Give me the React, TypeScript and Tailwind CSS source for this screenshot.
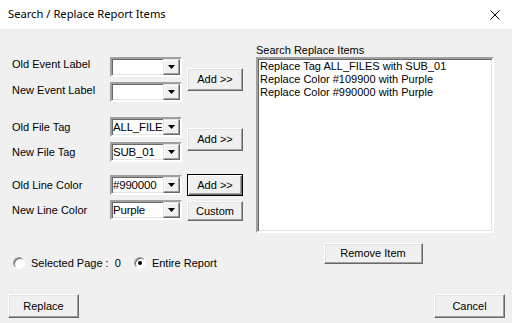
import React from "react";

const font = { fontFamily: '"Liberation Sans", Arial, sans-serif' };

function Arrow() {
  return (
    <svg width="7" height="4" viewBox="0 0 7 4" className="block">
      <path d="M0 0h7L3.5 4z" fill="#000" />
    </svg>
  );
}

function Combo({ value = "" }: { value?: string }) {
  return (
    <div className="flex h-[20px] w-[72px] border-2 border-t-[#a0a0a0] border-l-[#a0a0a0] border-b-white border-r-white bg-white shadow-[inset_1px_1px_0_#696969,inset_-1px_-1px_0_#e3e3e3]">
      <div className="flex-1 overflow-hidden whitespace-nowrap pl-[1px] pt-[1px] text-[11.5px] leading-[14px] tracking-[-0.2px] text-black">{value}</div>
      <div className="flex h-[16px] w-[17px] items-center justify-center border border-t-[#e3e3e3] border-l-[#e3e3e3] border-b-[#696969] border-r-[#696969] bg-[#f0f0f0] shadow-[inset_-1px_-1px_0_#a0a0a0,inset_1px_1px_0_#fff]">
        <Arrow />
      </div>
    </div>
  );
}

function Btn({ label, w, h, def = false }: { label: string; w: string; h: string; def?: boolean }) {
  return (
    <button
      className={`${w} ${h} ${def ? "border-[#000]" : "border-t-white border-l-white border-b-[#696969] border-r-[#696969]"} flex shrink-0 items-center justify-center border bg-[#f0f0f0] text-[11px] text-black ${def ? "shadow-[inset_1px_1px_0_#fff,inset_-1px_-1px_0_#696969,inset_-2px_-2px_0_#a0a0a0]" : "shadow-[inset_-1px_-1px_0_#a0a0a0,inset_1px_1px_0_#e3e3e3]"}`}
    >
      {label}
    </button>
  );
}

function Group({ rows, buttons }: { rows: [string, string, string][]; buttons: React.ReactNode }) {
  return (
    <div className="flex items-center">
      <div className="flex w-[98px] flex-col gap-[5px]">
        {rows.map(([l, , pad]) => (
          <div key={l} className={`flex h-[20px] items-center text-[11px] ${pad}`}>
            {l}
          </div>
        ))}
      </div>
      <div className="flex flex-col gap-[5px]">
        {rows.map(([l, v]) => (
          <Combo key={l} value={v} />
        ))}
      </div>
      <div className="ml-[5px] flex flex-col">{buttons}</div>
    </div>
  );
}

function Radio({ on, label }: { on?: boolean; label: string }) {
  return (
    <div className="flex items-center gap-[6px]">
      <div className="flex h-[12px] w-[12px] items-center justify-center rounded-full border border-t-[#a0a0a0] border-l-[#a0a0a0] border-b-white border-r-white bg-white shadow-[inset_1px_1px_0_#696969]">
        {on && <div className="h-[4px] w-[4px] rounded-full bg-black" />}
      </div>
      <span className="whitespace-pre text-[11px]">{label}</span>
    </div>
  );
}

export default function App() {
  return (
    <div className="flex h-[323px] w-[512px] flex-col overflow-hidden bg-[#f0f0f0] text-black" style={font}>
      <div className="flex h-[29px] shrink-0 items-center justify-between bg-white pl-[8px] pr-[12px]">
        <span className="text-[11.2px]" style={{ fontFamily: '"Noto Sans", "Open Sans", sans-serif' }}>
          Search / Replace Report Items
        </span>
        <svg width="10" height="10" viewBox="0 0 10 10">
          <path d="M0.5 0.5L9.5 9.5M9.5 0.5L0.5 9.5" stroke="#000" strokeWidth="1" />
        </svg>
      </div>

      <div className="flex shrink-0">
        <div className="flex w-[256px] flex-col pt-[28px]">
          <div className="pl-[12px]">
            <Group
              rows={[
                ["Old Event Label", "", "pb-[6px]"],
                ["New Event Label", "", "pb-[3px]"],
              ]}
              buttons={<Btn label="Add >>" w="w-[56px]" h="h-[23px]" />}
            />
          </div>
          <div className="mt-[15px] pl-[12px]">
            <Group
              rows={[
                ["Old File Tag", "ALL_FILES", ""],
                ["New File Tag", "SUB_01", ""],
              ]}
              buttons={<Btn label="Add >>" w="w-[56px]" h="h-[23px]" />}
            />
          </div>
          <div className="mt-[12px] pl-[12px]">
            <Group
              rows={[
                ["Old Line Color", "#990000", ""],
                ["New Line Color", "Purple", ""],
              ]}
              buttons={
                <div className="flex flex-col gap-[5px]">
                  <Btn label="Add >>" w="w-[56px]" h="h-[22px]" def />
                  <Btn label="Custom" w="w-[56px]" h="h-[20px]" />
                </div>
              }
            />
          </div>
          <div className="mt-[36px] flex h-[12px] items-center gap-[13px] pl-[13px]">
            <Radio label="Selected Page :  0" />
            <Radio on label="Entire Report" />
          </div>
        </div>

        <div className="flex flex-col pt-[15px]">
          <div className="h-[13px] text-[11px] leading-[13px]">Search Replace Items</div>
          <div className="h-[176px] w-[238px] border-2 border-t-[#a0a0a0] border-l-[#a0a0a0] border-b-white border-r-white bg-white px-[2px] pt-[1px] shadow-[inset_1px_1px_0_#696969,inset_-1px_-1px_0_#e3e3e3]">
            {["Replace Tag ALL_FILES with SUB_01", "Replace Color #109900 with Purple", "Replace Color #990000 with Purple"].map((t) => (
              <div key={t} className="h-[13px] text-[11px] leading-[13px]">
                {t}
              </div>
            ))}
          </div>
          <div className="mt-[10px] flex justify-center pr-[4px]">
            <Btn label="Remove Item" w="w-[99px]" h="h-[21px]" />
          </div>
        </div>
      </div>

      <div className="mt-[25px] flex shrink-0 justify-between pl-[8px] pr-[7px]">
        <Btn label="Replace" w="w-[71px]" h="h-[24px]" />
        <Btn label="Cancel" w="w-[71px]" h="h-[24px]" />
      </div>
    </div>
  );
}
